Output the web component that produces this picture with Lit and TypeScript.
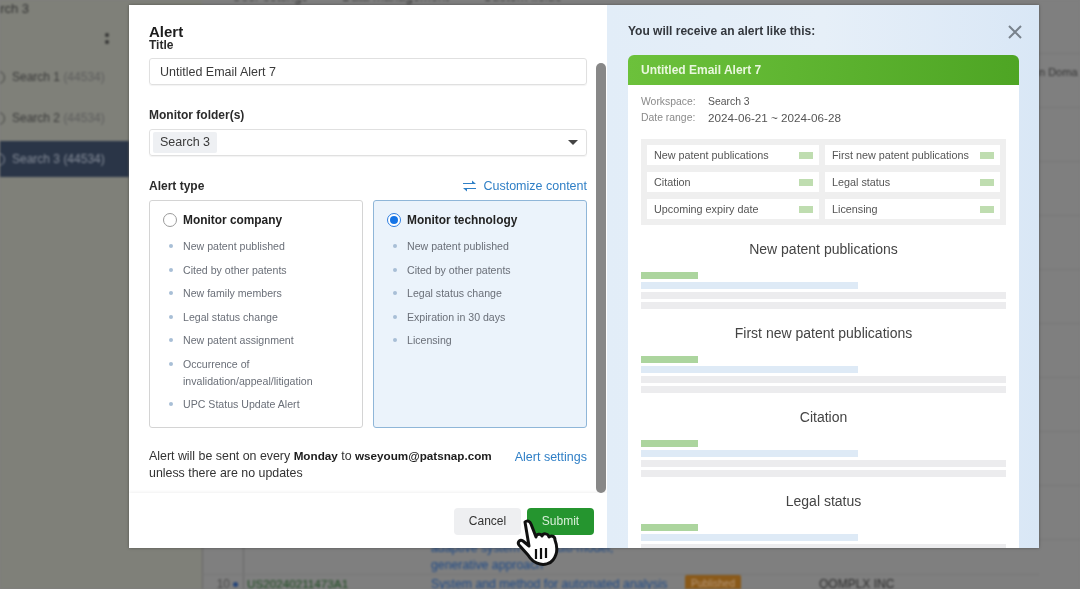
import { LitElement, html, css, svg } from "lit";
import { customElement } from "lit/decorators.js";

const company = ["New patent published","Cited by other patents","New family members","Legal status change","New patent assignment","Occurrence of invalidation/appeal/litigation","UPC Status Update Alert"];
const tech = ["New patent published","Cited by other patents","Legal status change","Expiration in 30 days","Licensing"];
const summary = ["New patent publications","First new patent publications","Citation","Legal status","Upcoming expiry date","Licensing"];
const sections = ["New patent publications","First new patent publications","Citation","Legal status"];

@customElement("app-root")
export class AppRoot extends LitElement {
  static styles = css`
    :host { display:block; width:1080px; height:589px; position:relative; overflow:hidden; background:#7f7f7f; font-family:"Liberation Sans",Arial,sans-serif; }
    .bg { width:1080px; height:589px; display:flex; background:#7f7f7f; color:#2c2c2c; overflow:hidden; filter:blur(.8px); }
    .side { width:202px; flex:none; display:flex; flex-direction:column; background:#7f8079; }
    .crumb { font-size:13px; line-height:18px; margin-left:-23px; color:#333; }
    .dots { height:15px; margin:15px 0 0 105px; display:flex; flex-direction:column; gap:3px; }
    .dots i { width:4px; height:4px; border-radius:50%; background:#333; }
    .list { margin-top:11px; width:129px; }
    .sitem { height:36px; display:flex; align-items:center; gap:7px; font-size:12px; margin-bottom:5px; color:#3a3a3a; white-space:nowrap; }
    .sitem .c { width:6px; height:11px; border:1px solid #444; border-left:0; border-radius:0 7px 7px 0; flex:none; margin-left:-2px; }
    .sitem span { color:#5e5e5e; }
    .sitem.on { background:#2a3547; color:#858c98; }
    .sitem.on span { color:#858c98; }
    .sitem.on .c { border-color:#858c98; }
    .main { flex:1; display:flex; flex-direction:column; justify-content:space-between; margin-bottom:-3px; min-width:0; }
    .tabs { display:flex; gap:34px; padding-left:30px; font-size:13px; line-height:14px; margin-top:-10px; height:15px; color:#2f2f2f; white-space:nowrap; }
    .row { display:grid; grid-template-columns:41px 188px 253px 134px 1fr; height:17.5px; font-size:12px; line-height:18px; border-left:1px solid #666; white-space:nowrap; }
    .row.t { border-top:1px solid #767676; }
    .num { text-align:right; padding-right:5px; color:#4a4a4a; border-right:1px solid #666; }
    .num i { display:inline-block; width:5px; height:5px; border-radius:50%; background:#25457a; margin-left:3px; vertical-align:1px; }
    .pn { color:#1c4a1f; padding-left:3px; font-size:11.7px; }
    .ttl { color:#1f4a86; font-size:12.3px; margin-left:-1px; }
    .badge { width:56px; height:18px; background:#8a5a1a; color:#b8997a; font-size:10px; text-align:center; border-radius:2px; }
    .strip { width:41px; flex:none; padding-top:64px; box-sizing:border-box; font-size:11px; line-height:16px; color:#333; white-space:nowrap; background:repeating-linear-gradient(180deg,transparent 0 53px,#767676 53px 54px); }

    .modal { position:absolute; left:129px; top:5px; width:910px; height:543px; display:flex; background:#fff; box-shadow:0 0 3px rgba(0,0,0,.35); overflow:hidden; }
    .left { width:478px; flex:none; display:flex; flex-direction:column; position:relative; filter:blur(.35px); }
    .head { height:35px; padding:18px 20px 0; box-sizing:border-box; flex:none; }
    .scroll { height:453px; padding:0 20px; box-sizing:border-box; overflow:hidden; flex:none; }
    h2 { margin:0; font-size:15px; line-height:17px; font-weight:700; color:#1c1c1c; }
    .lab { font-size:12px; font-weight:700; line-height:16px; color:#2b2b2b; }
    .t1 { margin-top:-2px; line-height:14px; height:14px; }
    .inp { height:27px; box-sizing:border-box; border:1px solid #e0e0e0; border-radius:3px; box-shadow:0 1px 1px rgba(0,0,0,.05); display:flex; align-items:center; font-size:12.5px; color:#3a3a3a; padding-left:10px; margin-top:6px; }
    .l2 { margin-top:22px; }
    .sel { padding-left:3px; justify-content:space-between; padding-right:8px; }
    .tag { background:#eef0f3; height:21px; line-height:21px; padding:0 7px; border-radius:2px; }
    .arrow { width:0; height:0; border:5px solid transparent; border-top:5px solid #444; border-bottom:0; }
    .thead { display:flex; justify-content:space-between; align-items:center; margin-top:22px; height:16px; }
    .link { color:#2f7fc6; font-size:12.5px; white-space:nowrap; }
    .custom { display:flex; align-items:center; gap:7px; }
    .cards { display:flex; gap:10px; margin-top:6px; }
    .card { flex:1; height:228px; box-sizing:border-box; border:1px solid #d4d4d4; border-radius:3px; padding:10px 13px; }
    .card.sel2 { background:#ebf3fb; border-color:#8fb6d8; }
    .chead { display:flex; align-items:center; gap:6px; font-size:11.9px; font-weight:700; line-height:18px; color:#222; }
    .radio { width:14px; height:14px; flex:none; border:1px solid #9a9a9a; border-radius:50%; background:#fff; box-sizing:border-box; display:flex; align-items:center; justify-content:center; }
    .radio.on { border-color:#2d7de0; }
    .radio.on i { width:8px; height:8px; border-radius:50%; background:#1574e6; }
    ul { list-style:none; padding:0 0 0 20px; margin:9px 0 0; }
    li { font-size:10.6px; line-height:17px; color:#6a6f78; margin-bottom:6.5px; position:relative; width:165px; }
    li::before { content:""; position:absolute; left:-14px; top:6px; width:4px; height:4px; border-radius:50%; background:#a8bfd6; }
    .note { display:flex; justify-content:space-between; margin-top:19px; font-size:12.4px; line-height:17px; color:#333; white-space:nowrap; }
    .note b { color:#1c1c1c; font-size:11.7px; }
    .note .link { padding-top:2px; }
    .bar { position:absolute; right:1px; top:58px; width:10px; height:430px; border-radius:5px; background:#888; }
    .foot { flex:1; display:flex; justify-content:flex-end; align-items:center; gap:6px; padding:2px 13px 0 0; box-shadow:0 -1px 3px rgba(0,0,0,.06); }
    .btn { height:27px; line-height:27px; border-radius:4px; font-size:12px; text-align:center; }
    .cancel { width:67px; background:#eeeff1; color:#333; }
    .submit { width:67px; background:#25952f; color:#d9efd9; }

    .right { flex:1; background:linear-gradient(90deg,#e2edf8,#e6eff8 50%,#d9e7f6); padding:0 20px 0 21px; position:relative; filter:blur(.7px); }
    .rhead { font-size:12px; font-weight:700; color:#33373d; line-height:16px; padding-top:18px; height:40px; box-sizing:border-box; }
    .close { position:absolute; right:17px; top:20px; }
    .mailh { height:30px; line-height:30px; margin-top:10px; padding-left:13px; background:linear-gradient(90deg,#6cc13b,#4ea524); border-radius:6px 6px 0 0; color:#e9f7de; font-size:12px; font-weight:700; }
    .mailb { background:#fff; padding:9px 13px 0; height:480px; overflow:hidden; }
    .meta { display:grid; grid-template-columns:67px 1fr; font-size:10.4px; line-height:16px; color:#8a8a8a; }
    .meta span:nth-child(even) { color:#555; }
    .meta .d { font-size:11.7px; }
    .grid { display:grid; grid-template-columns:178px 1fr; gap:7px 0; margin-top:13px; background:#efefef; padding:6px; }
    .cell { height:20px; background:#fff; display:flex; align-items:center; justify-content:space-between; padding:0 6px 0 7px; font-size:10.8px; color:#555; white-space:nowrap; margin-right:6px; }
    .cell:nth-child(even) { margin-right:0; }
    .cell i { width:14px; height:7px; background:#bfddb0; flex:none; }
    h3 { margin:0; font-size:14px; line-height:20px; font-weight:400; color:#444; text-align:center; }
    .sec { height:84px; }
    .secs { margin-top:14px; }
    .sk { height:6.5px; margin-top:3.5px; background:#ececee; }
    .sk.g { width:57px; background:#acd59e; margin-top:13px; }
    .sk.b { width:217px; background:#deeaf6; }
    .hand { position:absolute; left:515px; top:518px; filter:blur(.4px); }
  `;

  render() {
    return html`
      <div class="bg">
        <div class="side">
          <div class="crumb">Search 3</div>
          <div class="dots"><i></i><i></i></div>
          <div class="list">
            <div class="sitem"><i class="c"></i><div>Search 1 <span>(44534)</span></div></div>
            <div class="sitem"><i class="c"></i><div>Search 2 <span>(44534)</span></div></div>
            <div class="sitem on"><i class="c"></i><div>Search 3 <span>(44534)</span></div></div>
          </div>
        </div>
        <div class="main">
          <div class="tabs"><span>User settings</span><span>Data management</span><span>Custom fields</span></div>
          <div>
            <div class="row"><span class="num"></span><span></span><span class="ttl">adaptive system in a multi-model,</span><span></span><span></span></div>
            <div class="row"><span class="num"></span><span></span><span class="ttl">generative approach</span><span></span><span></span></div>
            <div class="row t"><span class="num">10<i></i></span><span class="pn">US20240211473A1</span><span class="ttl">System and method for automated analysis</span><span class="badge">Published</span><span>QOMPLX INC</span></div>
          </div>
        </div>
        <div class="strip">n Doma</div>
      </div>

      <div class="modal">
        <div class="left">
          <div class="head"><h2>Alert</h2></div>
          <div class="scroll">
            <div class="lab t1">Title</div>
            <div class="inp">Untitled Email Alert 7</div>
            <div class="lab l2">Monitor folder(s)</div>
            <div class="inp sel"><span class="tag">Search 3</span><i class="arrow"></i></div>
            <div class="thead">
              <span class="lab">Alert type</span>
              <span class="link custom">
                <svg width="13" height="12" viewBox="0 0 13 12" fill="#2f7fc6" stroke="none"><path d="M0 3h9V0.5L13 4H0zM13 8H4v3.5L0 8h13z"/><path d="M0 3h10v1H0zM3 8h10v1H3z"/></svg>
                Customize content
              </span>
            </div>
            <div class="cards">
              <div class="card">
                <div class="chead"><span class="radio"></span>Monitor company</div>
                <ul>${company.map((c) => html`<li>${c}</li>`)}</ul>
              </div>
              <div class="card sel2">
                <div class="chead"><span class="radio on"><i></i></span>Monitor technology</div>
                <ul>${tech.map((c) => html`<li>${c}</li>`)}</ul>
              </div>
            </div>
            <div class="note">
              <div>Alert will be sent on every <b>Monday</b> to <b>wseyoum@patsnap.com</b><br />unless there are no updates</div>
              <span class="link">Alert settings</span>
            </div>
          </div>
          <div class="bar"></div>
          <div class="foot">
            <div class="btn cancel">Cancel</div>
            <div class="btn submit">Submit</div>
          </div>
        </div>
        <div class="right">
          <div class="rhead">You will receive an alert like this:</div>
          <svg class="close" width="14" height="14" viewBox="0 0 14 14" stroke="#78828c" stroke-width="2"><path d="M1 1l12 12M13 1L1 13"/></svg>
          <div class="mailh">Untitled Email Alert 7</div>
          <div class="mailb">
            <div class="meta">
              <span>Workspace:</span><span>Search 3</span>
              <span>Date range:</span><span class="d">2024-06-21 ~ 2024-06-28</span>
            </div>
            <div class="grid">${summary.map((s) => html`<div class="cell">${s}<i></i></div>`)}</div>
            <div class="secs">
              ${sections.map((s) => html`<div class="sec"><h3>${s}</h3><div class="sk g"></div><div class="sk b"></div><div class="sk"></div><div class="sk"></div></div>`)}
            </div>
          </div>
        </div>
      </div>
      <svg class="hand" width="46" height="50" viewBox="0 0 46 50">
        ${svg`<path d="M10 4c2-2 5-1 6 2l5 13c0-3 5-4 6-1 1-3 6-3 7 1 2-2 6-1 6 3 3 8 2 15-2 20-3 4-9 5-13 4-6-1-9-4-12-9L4 27c-2-3 1-6 4-4l6 5z" fill="#fff" stroke="#111" stroke-width="3" stroke-linejoin="round"/>
        <path d="M21 31v10M26 30v11M31 30v10" stroke="#111" stroke-width="2.2"/>`}
      </svg>
    `;
  }
}
